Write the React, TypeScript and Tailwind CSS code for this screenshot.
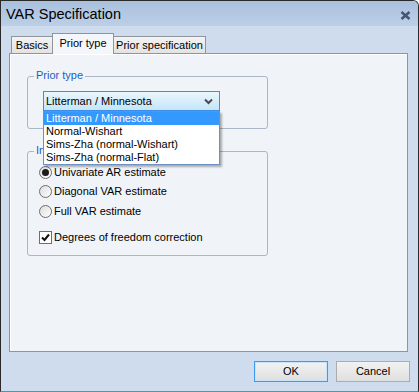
import React, { useState } from 'react';

const FONT = '"Liberation Sans", Arial, sans-serif';

const priorTypes = [
  'Litterman / Minnesota',
  'Normal-Wishart',
  'Sims-Zha (normal-Wishart)',
  'Sims-Zha (normal-Flat)',
];

const Radio: React.FC<{ checked?: boolean }> = ({ checked }) => (
  <span className="w-[13px] h-[13px] rounded-full border border-[#6e6e6e] bg-gradient-to-br from-[#dcdcdc] to-[#ffffff] flex items-center justify-center shrink-0">
    {checked && <span className="w-[7px] h-[7px] rounded-full bg-[#1c1c1c]" />}
  </span>
);

const Checkbox: React.FC<{ checked?: boolean }> = ({ checked }) => (
  <span className="w-[13px] h-[13px] border border-[#6e6e6e] bg-white flex items-center justify-center shrink-0">
    {checked && (
      <svg width="9" height="9" viewBox="0 0 9 9">
        <path d="M1 4.5 L3.5 7 L8 1.5" fill="none" stroke="#111" strokeWidth="2" />
      </svg>
    )}
  </span>
);

const GroupBox: React.FC<{ label: string; className?: string; children?: React.ReactNode }> = ({ label, className = '', children }) => (
  <div className={`relative ml-[17px] w-[241px] border border-[#aab6c8] rounded-[3px] ${className}`}>
    <span className="absolute -top-[8px] left-[6px] px-[2px] bg-[#f0f4f9] text-[#1d5fc0] text-[11px] leading-[13px]">{label}</span>
    {children}
  </div>
);

export default function App() {
  const [prior] = useState(0);
  const [initial] = useState(0);

  return (
    <div
      className="w-[419px] h-[392px] flex flex-col bg-[#cfdcee] border-l border-r border-t border-[#2a2a2a] border-b border-b-[#2fa7a9] rounded-tr-[6px] overflow-hidden text-[11px] text-black"
      style={{ fontFamily: FONT }}
    >
      {/* title bar */}
      <div className="h-[25px] shrink-0 flex items-center justify-between pl-[5px] pr-[7px] bg-gradient-to-b from-[#a9c0dd] to-[#bccfe7]">
        <span className="text-[14.5px] leading-none pt-[2px]">VAR Specification</span>
        <svg width="11" height="9" viewBox="0 0 11 9" className="mt-[3px]">
          <path d="M1.5 1 L9.5 8 M9.5 1 L1.5 8" stroke="#465573" strokeWidth="2.6" />
        </svg>
      </div>

      <div className="flex-1 flex flex-col pt-[7px] pl-[8px]">
        {/* tabs */}
        <div className="h-[20px] flex items-end pl-[2px] relative z-10">
          <div className="w-[41px] h-[17px] border-l border-t border-[#8f959d] bg-gradient-to-b from-[#f3f3f3] to-[#e3e3e3] flex items-center justify-center">
            Basics
          </div>
          <div className="w-[62px] h-[21px] -mb-px border-l border-t border-r border-[#8f959d] bg-[#f3f6fb] flex items-center justify-center pb-[2px]">
            Prior type
          </div>
          <div className="w-[92px] h-[17px] border-t border-r border-[#8f959d] bg-gradient-to-b from-[#f3f3f3] to-[#e3e3e3] flex items-center justify-center">
            Prior specification
          </div>
        </div>

        {/* panel */}
        <div className="w-[399px] h-[299px] border border-[#8f959d] bg-[#f0f4f9] shadow-[inset_1px_1px_0_#ffffff] flex flex-col">
          <GroupBox label="Prior type" className="mt-[22px] h-[53px] z-20">
            <div className="pl-[15px] pt-[14px]">
              <div className="relative w-[177px]">
                <div className="h-[20px] border border-[#3c8ee6] bg-gradient-to-b from-[#eaf6fd] to-[#c4e5f8] flex items-center justify-between pl-[2px] pr-[6px]">
                  <span>{priorTypes[prior]}</span>
                  <svg width="9" height="7" viewBox="0 0 9 7">
                    <path d="M1 1.5 L4.5 5 L8 1.5" fill="none" stroke="#4a4a4a" strokeWidth="2" />
                  </svg>
                </div>
                <div className="absolute top-full left-0 w-[177px] border border-[#6c8fc4] bg-white shadow-[2px_2px_2px_rgba(0,0,0,0.3)]">
                  {priorTypes.map((t, i) => (
                    <div
                      key={t}
                      className={`h-[13px] leading-[13px] pl-[2px] ${i === prior ? 'bg-[#3399ff] text-white' : ''}`}
                    >
                      {t}
                    </div>
                  ))}
                </div>
              </div>
            </div>
          </GroupBox>

          <GroupBox label="Initial covariance" className="mt-[22px] h-[105px]">
            <div className="flex flex-col pl-[11px]">
              {['Univariate AR estimate', 'Diagonal VAR estimate', 'Full VAR estimate'].map((r, i) => (
                <label key={r} className={`flex items-center gap-[2px] h-[13px] ${i === 0 ? 'mt-[14px]' : i === 1 ? 'mt-[6px]' : 'mt-[7px]'}`}>
                  <Radio checked={i === initial} />
                  <span>{r}</span>
                </label>
              ))}
              <label className="flex items-center gap-[2px] h-[13px] mt-[13px]">
                <Checkbox checked />
                <span>Degrees of freedom correction</span>
              </label>
            </div>
          </GroupBox>
        </div>

        {/* buttons */}
        <div className="flex justify-end gap-[8px] pr-[8px] mt-[9px]">
          <button className="w-[74px] h-[21px] border border-[#3c9af0] shadow-[inset_0_0_0_1px_#c6e4fb] bg-gradient-to-b from-[#f2f2f2] to-[#dfdfdf]">
            OK
          </button>
          <button className="w-[74px] h-[21px] border border-[#acacac] bg-gradient-to-b from-[#f2f2f2] to-[#dfdfdf]">
            Cancel
          </button>
        </div>
      </div>
    </div>
  );
}
